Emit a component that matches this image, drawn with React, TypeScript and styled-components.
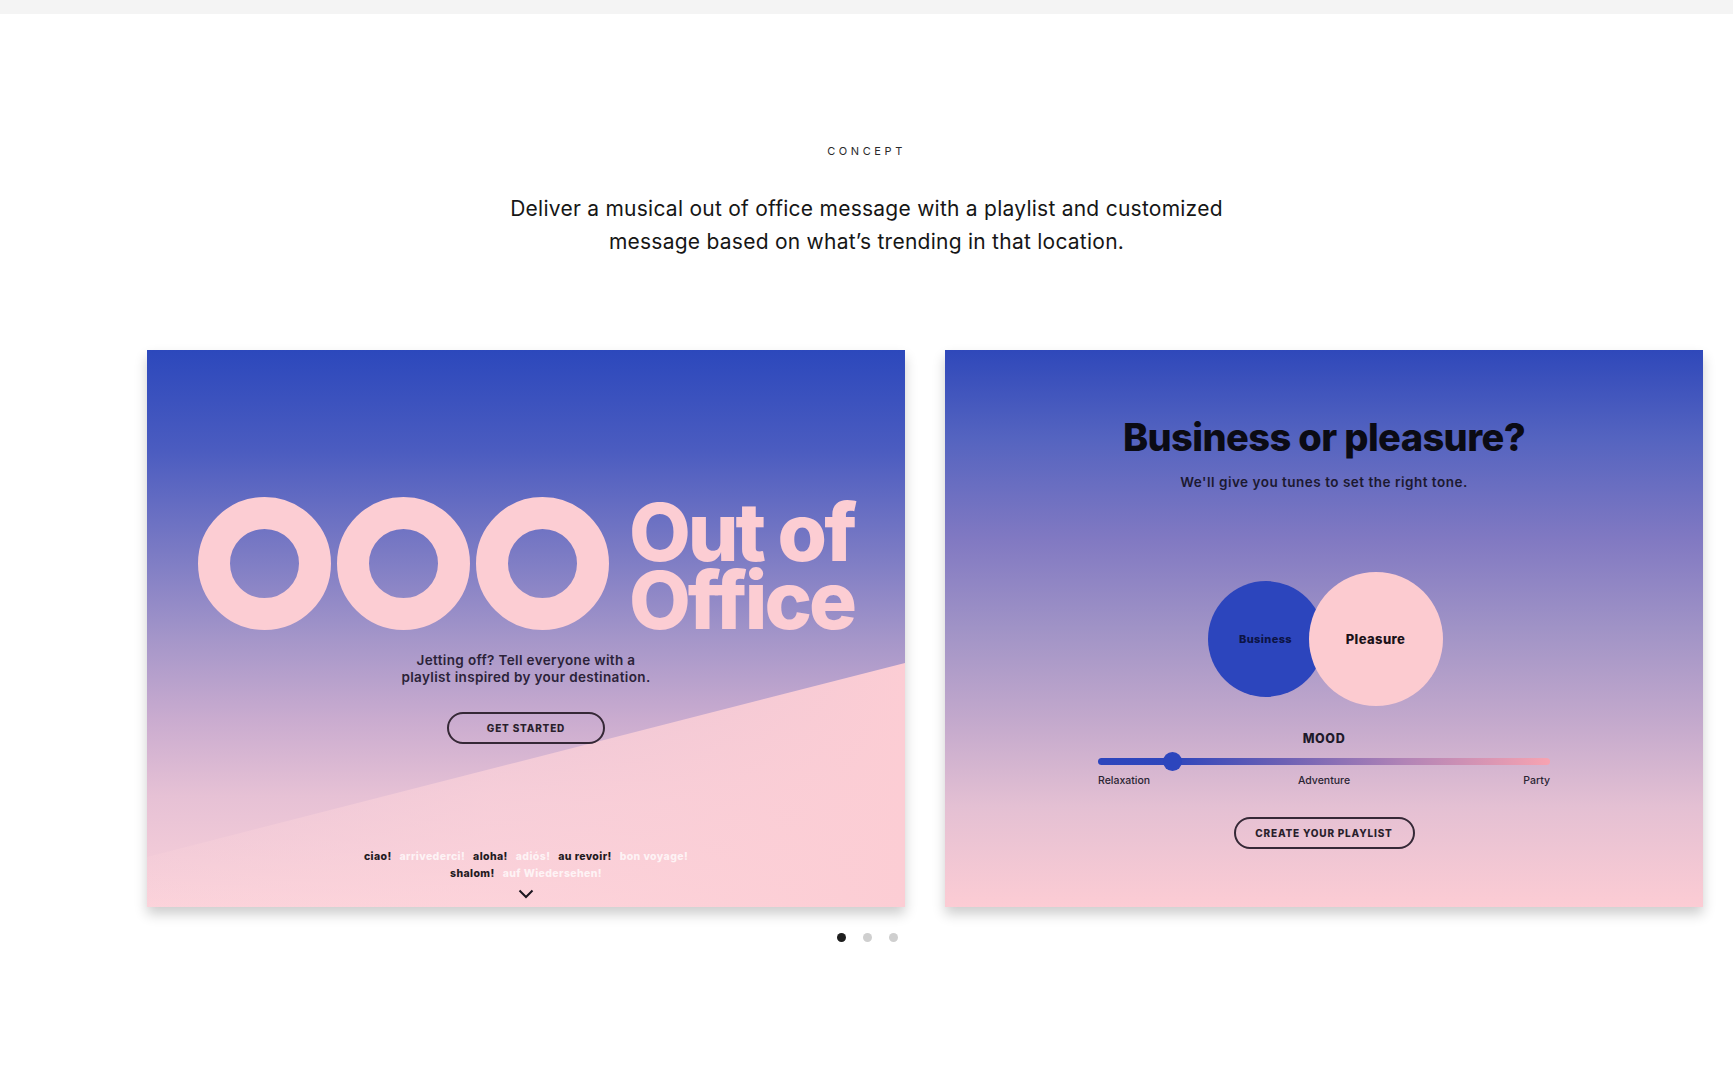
import styled, { createGlobalStyle } from "styled-components"

const GlobalStyle = createGlobalStyle`
  html, body {
    margin: 0;
    padding: 0;
    background: #fff;
  }
  body {
    font-family: Inter, "Noto Sans", sans-serif;
    color: #1a1a1a;
    overflow: hidden;
  }
  * { box-sizing: border-box; }
`

const TopBar = styled.div`
  height: 14px;
  background: #f4f4f4;
`

const Section = styled.section`
  display: flex;
  flex-direction: column;
  align-items: center;
`

const Eyebrow = styled.div`
  margin-top: 130px;
  font-size: 11px;
  line-height: 14px;
  letter-spacing: 3.6px;
  color: #2a2a2a;
`

const Lead = styled.p`
  margin: 34px 0 0;
  width: 800px;
  font-size: 21px;
  line-height: 33px;
  text-align: center;
  color: #161616;
  letter-spacing: 0.25px;
`

const CardsRow = styled.div`
  align-self: stretch;
  display: flex;
  gap: 40px;
  margin-top: 92px;
  padding-left: 147px;
`

interface CardProps {
  $bg: string;
}

const Card = styled.div<CardProps>`
  position: relative;
  flex-shrink: 0;
  width: 758px;
  height: 557px;
  overflow: hidden;
  background: ${p => p.$bg};
  box-shadow: 0 7px 12px rgba(0, 0, 0, 0.2);
  display: flex;
  flex-direction: column;
  align-items: center;
`

const Backdrop = styled.svg`
  position: absolute;
  inset: 0;
  width: 100%;
  height: 100%;
`

const Content = styled.div<{ $top: number }>`
  position: relative;
  display: flex;
  flex-direction: column;
  align-items: center;
  flex: 1;
  width: 100%;
  padding-top: ${p => p.$top}px;
`

const LogoRow = styled.div`
  display: flex;
  align-items: center;
  gap: 6px;
  height: 133px;
`

const Ring = styled.div`
  width: 133px;
  height: 133px;
  border-radius: 50%;
  border: 32px solid #fccdd3;
`

const Wordmark = styled.div`
  margin-left: 14px;
  margin-top: 4px;
  font-family: Inter, sans-serif;
  font-weight: 800;
  font-size: 80px;
  letter-spacing: -3px;
  color: #fccdd3;
`

const WordLine = styled.span`
  display: block;
  height: 68px;
  line-height: 68px;
`

const Tagline = styled.p`
  margin: 22px 0 0;
  font-size: 13.5px;
  font-weight: 600;
  line-height: 17px;
  text-align: center;
  color: #2b2238;
  letter-spacing: 0.35px;
`

const PillButton = styled.div<{ $w: number }>`
  width: ${p => p.$w}px;
  height: 32px;
  border: 2px solid #352836;
  border-radius: 16px;
  display: flex;
  align-items: center;
  justify-content: center;
  font-size: 10px;
  font-weight: 800;
  letter-spacing: 0.8px;
  color: #2a1f2c;
`

const Greetings = styled.div`
  margin-top: auto;
  display: flex;
  flex-direction: column;
  align-items: center;
  font-size: 10.5px;
  font-weight: 800;
  line-height: 17px;
  letter-spacing: 0.4px;
  white-space: nowrap;
`

const Word = styled.span<{ $light?: boolean }>`
  color: ${p => (p.$light ? "rgba(255, 255, 255, 0.75)" : "#1f1a22")};
  margin: 0 4px;
`

const Chevron = styled.svg`
  display: block;
  margin: 7px 0 8px;
`

const Title = styled.h2`
  margin: 0;
  font-family: Inter, sans-serif;
  font-size: 38px;
  line-height: 48px;
  font-weight: 800;
  letter-spacing: -0.6px;
  color: #0b0b14;
`

const Subtitle = styled.p`
  margin: 13px 0 0;
  font-size: 13.5px;
  font-weight: 600;
  letter-spacing: 0.5px;
  color: #1c1930;
`

const Venn = styled.div`
  display: flex;
  align-items: center;
  margin-top: 82px;
  margin-left: 2px;
`

const Bubble = styled.div<{ $size: number; $bg: string; $fs: number; $color: string }>`
  width: ${p => p.$size}px;
  height: ${p => p.$size}px;
  border-radius: 50%;
  background: ${p => p.$bg};
  display: flex;
  align-items: center;
  justify-content: center;
  font-size: ${p => p.$fs}px;
  font-weight: 800;
  letter-spacing: 0.4px;
  color: ${p => p.$color};
  & + & {
    margin-left: -15px;
  }
`

const MoodLabel = styled.div`
  margin-top: 25px;
  font-size: 12.5px;
  font-weight: 800;
  letter-spacing: 0.6px;
  color: #1e1a2a;
`

const Slider = styled.div`
  width: 452px;
  margin-top: 12px;
`

const Track = styled.div`
  position: relative;
  height: 7px;
  border-radius: 4px;
  background: linear-gradient(90deg, #2c45bd 0%, #2f46bc 17%, #6a5fb4 40%, #b284b6 68%, #f7a3b1 100%);
`

const Thumb = styled.div`
  position: absolute;
  top: 50%;
  width: 19px;
  height: 19px;
  margin: -9.5px 0 0 -9.5px;
  border-radius: 50%;
  background: #2c45bd;
`

const SliderLabels = styled.div`
  display: grid;
  grid-template-columns: 1fr auto 1fr;
  margin-top: 9px;
  font-size: 10.5px;
  font-weight: 500;
  color: #2a2433;

  & > span:last-child {
    text-align: right;
  }
`

const Dots = styled.div`
  display: flex;
  gap: 17px;
  margin-top: 26px;
  padding-left: 1px;
`

const Dot = styled.span<{ $active?: boolean }>`
  width: 9px;
  height: 9px;
  border-radius: 50%;
  background: ${p => (p.$active ? "#1e1e1e" : "#cfcfcf")};
`

const cardOneBg =
  "linear-gradient(180deg, #2c48bc 0%, #4b5cc0 18%, #7a7ac4 36%, #a596c9 52%, #c9abcf 66%, #e6c1d5 80%, #fbd2da 100%)"
const cardTwoBg =
  "linear-gradient(180deg, #2f48ba 0%, #5564c0 16%, #8179c2 34%, #a093c6 50%, #c2a8cc 66%, #e4c0d3 82%, #fcccd4 100%)"

const greetingLines: [string, boolean][][] = [
  [
    ["ciao!", false],
    ["arrivederci!", true],
    ["aloha!", false],
    ["adiós!", true],
    ["au revoir!", false],
    ["bon voyage!", true],
  ],
  [
    ["shalom!", false],
    ["auf Wiedersehen!", true],
  ],
]

function OutOfOfficeCard() {
  return (
    <Card $bg={cardOneBg}>
      <Backdrop viewBox="0 0 758 557" preserveAspectRatio="none">
        <defs>
          <linearGradient id="shard" x1="0" y1="0" x2="1" y2="0">
            <stop offset="0" stopColor="#fdd6dc" stopOpacity="0.2" />
            <stop offset="0.45" stopColor="#fdd3da" stopOpacity="0.7" />
            <stop offset="1" stopColor="#fccdd4" stopOpacity="1" />
          </linearGradient>
        </defs>
        <polygon points="758,313 758,557 0,557 0,507" fill="url(#shard)" />
      </Backdrop>
      <Content $top={147}>
        <LogoRow>
          <Ring />
          <Ring />
          <Ring />
          <Wordmark>
            <WordLine>Out of</WordLine>
            <WordLine>Office</WordLine>
          </Wordmark>
        </LogoRow>
        <Tagline>
          Jetting off? Tell everyone with a
          <br />
          playlist inspired by your destination.
        </Tagline>
        <div style={{ marginTop: 26 }}>
          <PillButton $w={158}>GET STARTED</PillButton>
        </div>
        <Greetings>
          {greetingLines.map((line, i) => (
            <div key={i}>
              {line.map(([w, light]) => (
                <Word key={w} $light={light}>
                  {w}
                </Word>
              ))}
            </div>
          ))}
        </Greetings>
        <Chevron width="16" height="10" viewBox="0 0 16 10">
          <polyline points="1.5,1.5 8,8 14.5,1.5" fill="none" stroke="#1c1620" strokeWidth="2" />
        </Chevron>
      </Content>
    </Card>
  )
}

function MoodCard() {
  const value = 16.5
  return (
    <Card $bg={cardTwoBg}>
      <Content $top={63}>
        <Title>Business or pleasure?</Title>
        <Subtitle>We'll give you tunes to set the right tone.</Subtitle>
        <Venn>
          <Bubble $size={116} $bg="#2c45bd" $fs={11} $color="#0c1445">
            Business
          </Bubble>
          <Bubble $size={134} $bg="#fccbd0" $fs={13} $color="#1b1219">
            Pleasure
          </Bubble>
        </Venn>
        <MoodLabel>MOOD</MoodLabel>
        <Slider>
          <Track>
            <Thumb style={{ left: `${value}%` }} />
          </Track>
          <SliderLabels>
            <span>Relaxation</span>
            <span>Adventure</span>
            <span>Party</span>
          </SliderLabels>
        </Slider>
        <div style={{ marginTop: 30 }}>
          <PillButton $w={181}>CREATE YOUR PLAYLIST</PillButton>
        </div>
      </Content>
    </Card>
  )
}

export default function App() {
  return (
    <>
      <GlobalStyle />
      <TopBar />
      <Section>
        <Eyebrow>CONCEPT</Eyebrow>
        <Lead>
          Deliver a musical out of office message with a playlist and customized
          <br />
          message based on what’s trending in that location.
        </Lead>
        <CardsRow>
          <OutOfOfficeCard />
          <MoodCard />
        </CardsRow>
        <Dots>
          <Dot $active />
          <Dot />
          <Dot />
        </Dots>
      </Section>
    </>
  )
}
